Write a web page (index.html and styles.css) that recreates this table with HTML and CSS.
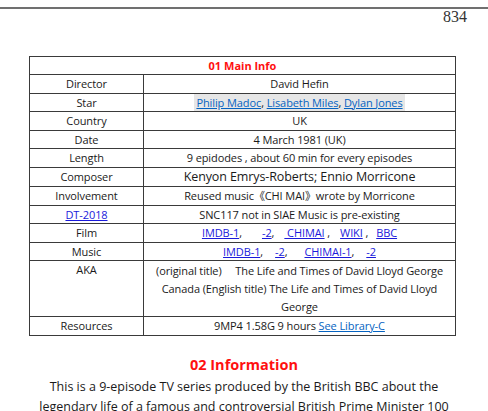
FILE: index.html
```html
<!DOCTYPE html>
<html>
<head>
<meta charset="utf-8">
<link rel="stylesheet" href="styles.css">
</head>
<body>
<div class="page">
  <div class="running-head"></div>
  <div class="page-no">834</div>
  <table class="info">
    <colgroup><col class="c1"><col class="c2"></colgroup>
    <tr><td class="title" colspan="2">01 Main Info</td></tr>
    <tr><td>Director</td><td>David Hefin</td></tr>
    <tr><td>Star</td><td><span class="hl"><a class="lk" href="#">Philip Madoc</a>, <a class="lk" href="#">Lisabeth Miles</a>, <a class="lk" href="#">Dylan Jones</a></span></td></tr>
    <tr><td>Country</td><td>UK</td></tr>
    <tr><td>Date</td><td>4 March 1981 (UK)</td></tr>
    <tr><td>Length</td><td>9 epidodes , about 60 min for every episodes</td></tr>
    <tr class="big"><td>Composer</td><td class="v">Kenyon Emrys-Roberts; Ennio Morricone</td></tr>
    <tr><td>Involvement</td><td>Reused music《CHI MAI》wrote by Morricone</td></tr>
    <tr><td><a class="lb" href="#">DT-2018</a></td><td>SNC117 not in SIAE Music is pre-existing</td></tr>
    <tr><td>Film</td><td><a class="lb" href="#">IMDB-1</a>,<span class="g20"></span><a class="lb" href="#">-2</a>,<span class="g10"></span><a class="lb" href="#">&nbsp;CHIMAI</a> ,<span class="g10"></span><a class="lb" href="#">WIKI</a> ,<span class="g8"></span><a class="lb" href="#">BBC</a></td></tr>
    <tr><td>Music</td><td><a class="lb" href="#">IMDB-1</a>,<span class="g12"></span><a class="lb" href="#">-2</a>,<span class="g17"></span><a class="lb" href="#">CHIMAI-1</a>,<span class="g12"></span><a class="lb" href="#">-2</a></td></tr>
    <tr class="tall"><td>AKA</td><td class="v">(original title)&nbsp;&nbsp;&nbsp;&nbsp; The Life and Times of David Lloyd George Canada (English title) The Life and Times of David Lloyd George</td></tr>
    <tr><td>Resources</td><td>9MP4 1.58G 9 hours <a class="lk" href="#">See Library-C</a></td></tr>
  </table>
  <h2 class="section">02 Information</h2>
  <p class="body-text">This is a 9-episode TV series produced by the British BBC about the legendary life of a famous and controversial British Prime Minister 100 years ago, David Lloyd George.</p>
</div>
</body>
</html>
```

FILE: styles.css
```css
html, body {
  margin: 0;
  padding: 0;
  background: #fff;
}
body {
  width: 488px;
  height: 411px;
  overflow: hidden;
  font-family: "Open Sans", "Noto Sans CJK SC", sans-serif;
  color: #1a1a1a;
}
.page {
  padding-top: 7px;
}
.running-head {
  border-top: 2px solid #707070;
}
.page-no {
  font-family: "Liberation Serif", "Times New Roman", serif;
  font-size: 16px;
  line-height: 14px;
  text-align: right;
  padding-right: 21px;
  color: #333;
  margin-top: 1px;
}
.info {
  border-collapse: collapse;
  margin: 32px 0 0 29px;
  width: 427px;
  font-size: 11px;
  letter-spacing: -0.1px;
  table-layout: fixed;
}
.info col.c1 {
  width: 114px;
}
.info td {
  border: 1px solid #3a3a3a;
  text-align: center;
  height: 17.5px;
  padding: 0 4px;
  line-height: 17.5px;
  white-space: nowrap;
  overflow: hidden;
}
.info td.title {
  color: #ff1010;
  font-weight: bold;
  letter-spacing: 0;
  height: 17px;
  line-height: 17px;
}
.info tr.big td.v {
  font-size: 12.5px;
  line-height: 18.5px;
  height: 18.5px;
}
.info tr.tall td {
  height: 54px;
  white-space: normal;
  line-height: 18px;
  vertical-align: top;
}
.info tr.tall td.v {
  padding: 1px 7px 0 7px;
}
.g8, .g10, .g12, .g17, .g20 {
  display: inline-block;
}
.g8 { width: 8px; }
.g10 { width: 10px; }
.g12 { width: 12px; }
.g17 { width: 17px; }
.g20 { width: 20px; }
.hl {
  background: #e6e6e6;
  padding: 1px 2px;
}
a.lk {
  color: #0563c1;
  text-decoration: underline;
}
a.lb {
  color: #1a1adb;
  text-decoration: underline;
}
.section {
  margin: 19px 0 0 0;
  text-align: center;
  color: #ff1010;
  font-size: 14.5px;
  line-height: 20px;
  font-weight: bold;
}
.body-text {
  margin: 2px 0 0 0;
  padding: 0 38px;
  text-align: center;
  font-size: 12.5px;
  line-height: 20px;
}
```
